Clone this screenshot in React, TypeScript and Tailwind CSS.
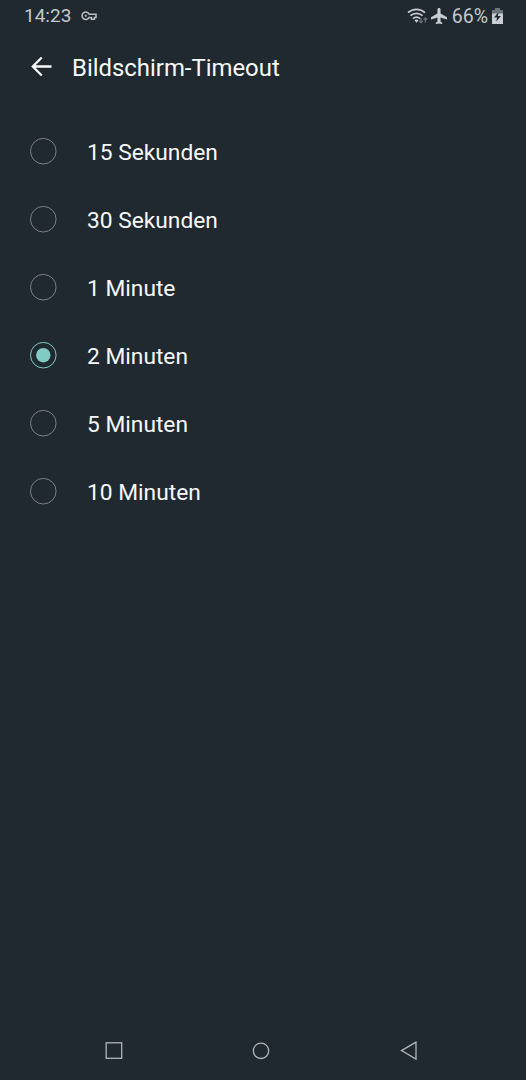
import { useState } from "react";

const options = [
  "15 Sekunden",
  "30 Sekunden",
  "1 Minute",
  "2 Minuten",
  "5 Minuten",
  "10 Minuten",
];

function KeyIcon() {
  return (
    <svg width="16" height="10" viewBox="0 0 16 10" fill="none" stroke="#b9bfc4" strokeWidth="1.5">
      <path d="M8.1 3.2A3.7 3.7 0 1 0 8.1 6.4H10.4V8.3H13.4V6.4H15V3.2Z" />
      <circle cx="4.7" cy="4.8" r="1.1" fill="#b9bfc4" stroke="none" />
    </svg>
  );
}

function WifiIcon() {
  return (
    <svg width="21" height="17" viewBox="0 0 21 17" fill="none">
      <g stroke="#c6cbcf" strokeWidth="1.7">
        <path d="M1 4.6C5.9 0.2 13.1 0.2 18 4.6" />
        <path d="M3.4 7.7C7 4.5 12 4.5 15.6 7.7" />
        <path d="M5.9 10.6C8.1 8.7 10.9 8.7 13.1 10.6" />
      </g>
      <path d="M7.4 12.3Q9.5 10.8 11.6 12.3L9.5 14.7Z" fill="#c6cbcf" />
      <g stroke="#6d747a" strokeWidth="1.2">
        <path d="M14 9.8V14.5M12.2 12.8L14 14.7L15.8 12.8" />
        <path d="M18.4 14.5V10M16.6 11.7L18.4 9.8L20.2 11.7" />
      </g>
    </svg>
  );
}

function PlaneIcon() {
  return (
    <svg width="16" height="16" viewBox="2 2 19 20" preserveAspectRatio="none" fill="#c9ced2" stroke="#c9ced2" strokeWidth="0.6">
      <path d="M21 16v-2l-8-5V3.5c0-.83-.67-1.5-1.5-1.5S10 2.67 10 3.5V9l-8 5v2l8-2.5V19l-2 1.5V22l3.5-1 3.5 1v-1.5L13 19v-5.5l8 2.5z" />
    </svg>
  );
}

function BatteryIcon() {
  return (
    <svg width="11" height="16" viewBox="0 0 11 16">
      <path d="M3 0H8V2H11V6H0V2H3Z" fill="#6d747a" />
      <path d="M0 5.5H11V16H0Z" fill="#c9ced2" />
      <path d="M6.5 4L2 9.6H5L4.3 13.5L8.9 8.1H5.9Z" fill="#212930" />
    </svg>
  );
}

function StatusBar() {
  return (
    <div className="flex h-8 items-center justify-between pl-6 pr-[23px] text-[#c3c8cc]">
      <div className="flex items-center">
        <span className="text-[19px] leading-8">14:23</span>
        <span className="ml-2.5">
          <KeyIcon />
        </span>
      </div>
      <div className="flex items-center">
        <WifiIcon />
        <span className="ml-[3px]">
          <PlaneIcon />
        </span>
        <span className="ml-[5px] mr-1 pt-0.5 text-[19.5px] leading-8">66%</span>
        <BatteryIcon />
      </div>
    </div>
  );
}

export default function App() {
  const [selected, setSelected] = useState("2 Minuten");

  return (
    <div className="flex h-[1080px] w-[526px] flex-col bg-[#212930] font-[Roboto,sans-serif] text-[#f7f9fa]">
      <StatusBar />

      <header className="flex h-[70px] items-center pl-[31px]">
        <button aria-label="Zurück">
          <svg width="21" height="20" viewBox="0 0 21 20" fill="none" stroke="#f7f9fa" strokeWidth="2.3">
            <path d="M20.5 9.5H2M10.8 0.5L1.8 9.5L10.8 18.5" />
          </svg>
        </button>
        <h1 className="ml-5 mt-0.5 text-[23.9px] leading-8">Bildschirm-Timeout</h1>
      </header>

      <main className="flex-1 pt-[15px]">
        {options.map((option) => (
          <button
            key={option}
            role="radio"
            aria-checked={selected === option}
            onClick={() => setSelected(option)}
            className="flex h-[68px] w-full items-center pl-[30px] text-left"
          >
            <svg width="27" height="27" viewBox="0 0 27 27" fill="none">
              <circle
                cx="13.3"
                cy="13.2"
                r="12.8"
                stroke={selected === option ? "#80cbc4" : "#7a8086"}
              />
              {selected === option && <circle cx="13.3" cy="13.2" r="7.2" fill="#80cbc4" />}
            </svg>
            <span className="ml-[30px] mt-1 text-[22.75px] leading-8">{option}</span>
          </button>
        ))}
      </main>

      <nav className="flex h-[59px] items-center pl-[105px]">
        <svg width="312" height="20" viewBox="0 0 312 20" fill="none" stroke="#aeb4b9" strokeWidth="1.3">
          <rect x="1.2" y="1.8" width="15.5" height="15.5" />
          <circle cx="156" cy="9.8" r="7.7" />
          <path d="M311 1.1V18.1L296.5 9.6Z" />
        </svg>
      </nav>
    </div>
  );
}
